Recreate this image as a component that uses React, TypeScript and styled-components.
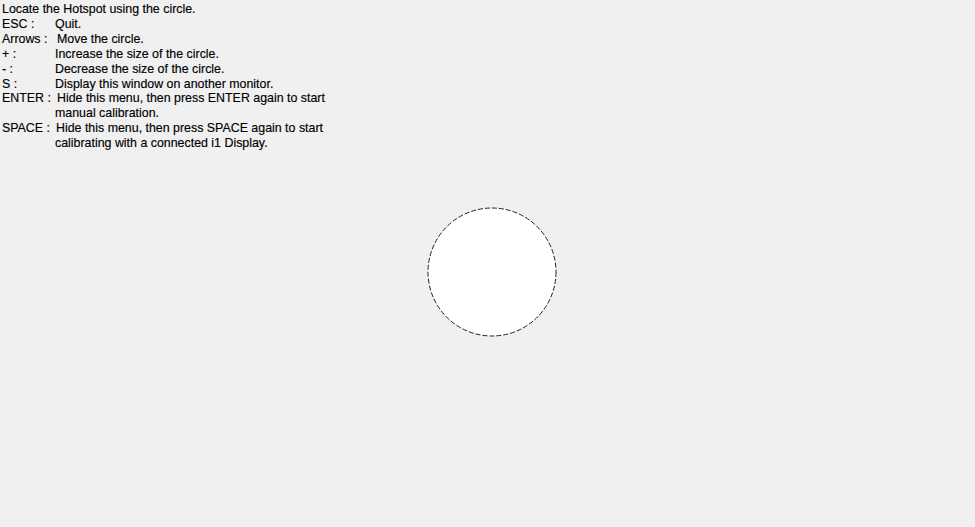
import React from 'react';
import styled, { createGlobalStyle } from 'styled-components';

const GlobalStyle = createGlobalStyle`
  html, body {
    margin: 0;
    padding: 0;
    background: #f0f0f0;
  }
  body {
    font-family: "Liberation Sans", Arial, sans-serif;
    color: #000;
  }
`;

const Screen = styled.div`
  position: relative;
  width: 975px;
  height: 527px;
  overflow: hidden;
  background: #f0f0f0;
`;

const Menu = styled.div`
  padding: 2px 0 0 2px;
  font-size: 12.4px;
  line-height: 14.9px;
  display: flex;
  flex-direction: column;
  -webkit-text-stroke: 0.15px #000;
`;

const Row = styled.div`
  display: flex;
  align-items: flex-start;
`;

const Key = styled.span<{ $width?: number }>`
  flex: 0 0 auto;
  width: ${(p) => (p.$width ?? 53)}px;
  white-space: nowrap;
`;

const Desc = styled.span`
  white-space: nowrap;
`;

const Canvas = styled.div`
  position: absolute;
  inset: 0;
`;

const Hotspot = styled.svg`
  position: absolute;
  left: 427px;
  top: 207px;
`;

const keys: { key: string; desc: string; width?: number; lines?: string[] }[] = [
  { key: 'ESC :', desc: 'Quit.' },
  { key: 'Arrows :', desc: 'Move the circle.', width: 55 },
  { key: '+ :', desc: 'Increase the size of the circle.' },
  { key: '- :', desc: 'Decrease the size of the circle.' },
  { key: 'S :', desc: 'Display this window on another monitor.' },
  {
    key: 'ENTER :',
    desc: 'Hide this menu, then press ENTER again to start',
    width: 55,
    lines: ['manual calibration.'],
  },
  {
    key: 'SPACE :',
    desc: 'Hide this menu, then press SPACE again to start',
    width: 54,
    lines: ['calibrating with a connected i1 Display.'],
  },
];

export default function App() {
  return (
    <Screen>
      <GlobalStyle />
      <Menu>
        <div>Locate the Hotspot using the circle.</div>
        {keys.map((k) => (
          <React.Fragment key={k.key}>
            <Row>
              <Key $width={k.width}>{k.key}</Key>
              <Desc>{k.desc}</Desc>
            </Row>
            {k.lines?.map((l) => (
              <Row key={l}>
                <Key />
                <Desc>{l}</Desc>
              </Row>
            ))}
          </React.Fragment>
        ))}
      </Menu>
      <Canvas>
        <Hotspot width="130" height="130" viewBox="0 0 130 130">
          <circle
            cx="65"
            cy="65"
            r="64"
            fill="#ffffff"
            stroke="#222"
            strokeWidth="1"
            strokeDasharray="5 2"
          />
        </Hotspot>
      </Canvas>
    </Screen>
  );
}
